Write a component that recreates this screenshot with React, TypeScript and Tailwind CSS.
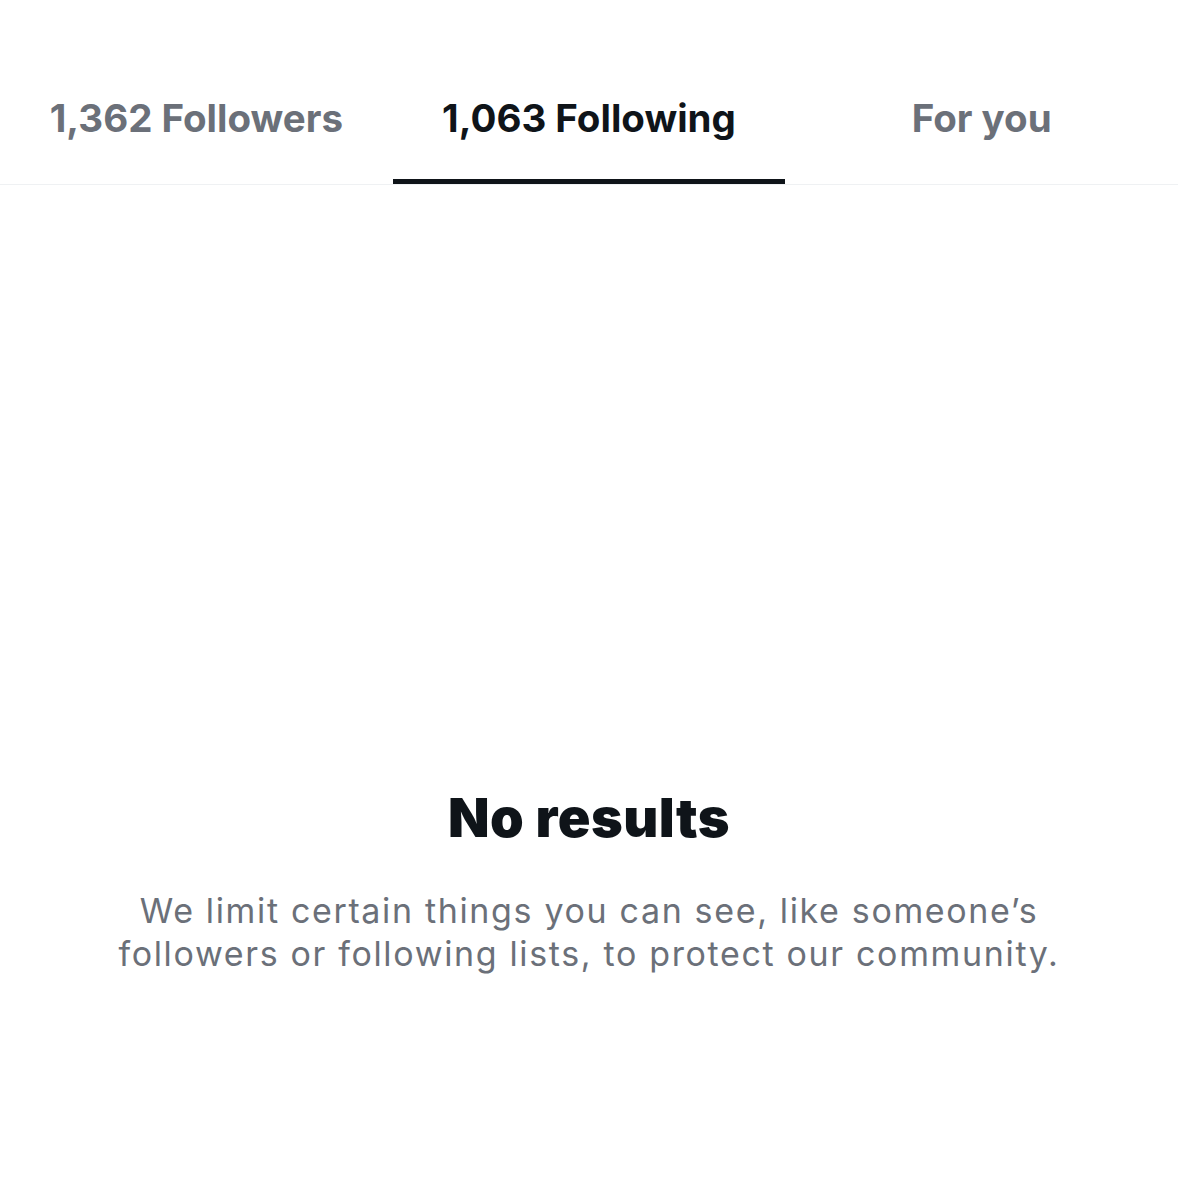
import React from "react";

const tabs = [
  { label: "1,362 Followers", active: false },
  { label: "1,063 Following", active: true },
  { label: "For you", active: false },
];

export default function App() {
  return (
    <div
      className="w-[1178px] h-[1178px] bg-white overflow-hidden"
      style={{ fontFamily: "Inter, 'Noto Sans', sans-serif" }}
    >
      <div className="flex border-b border-[#eff1f3]">
        {tabs.map((t) => (
          <div
            key={t.label}
            className={`flex-1 h-[184px] pt-[57px] flex items-center justify-center border-b-[5px] ${
              t.active ? "border-[#0f1419] text-[#0f1419]" : "border-transparent text-[#6b7079]"
            }`}
          >
            <span className="text-[38.5px] font-bold leading-none">{t.label}</span>
          </div>
        ))}
      </div>
      <div className="flex flex-col items-center pt-[606px]">
        <h1 className="text-[54px] font-black leading-none tracking-[0.5px] text-[#0f1419]">
          No results
        </h1>
        <p className="mt-[44px] text-center text-[34px] leading-[43px] tracking-[1.65px] text-[#6b7079] w-[1100px]">
          We limit certain things you can see, like someone’s
          <br />
          followers or following lists, to protect our community.
        </p>
      </div>
    </div>
  );
}
